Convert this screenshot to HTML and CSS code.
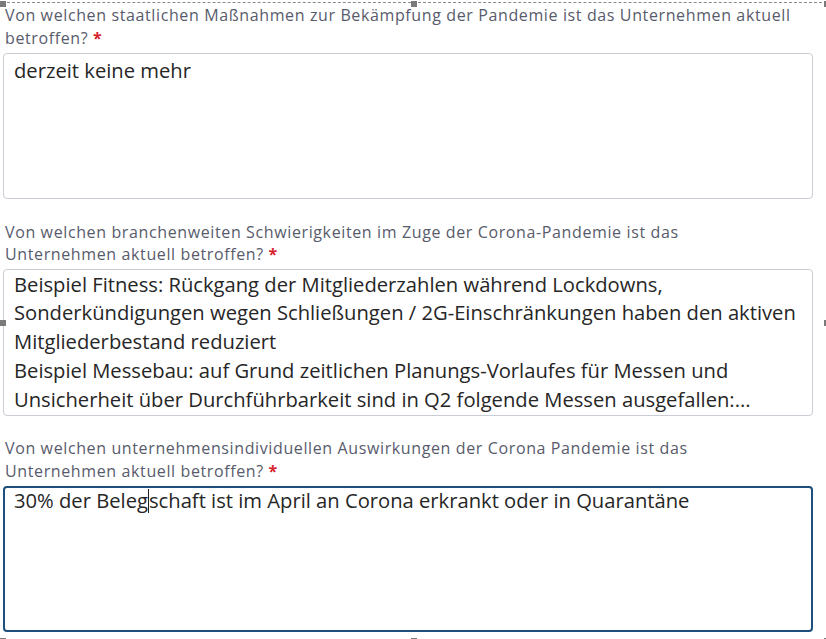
FILE: index.html
```html
<!DOCTYPE html>
<html lang="de">
<head>
    <meta charset="UTF-8">
    <title>Fragebogen Corona-Auswirkungen</title>
    <link rel="stylesheet" href="styles.css">
</head>
<body>
    <div class="selection-frame">
        <span class="handle handle-tl"></span>
        <span class="handle handle-tm"></span>
        <span class="handle handle-tr"></span>
        <span class="handle handle-ml"></span>
        <span class="handle handle-mr"></span>
        <span class="handle handle-bl"></span>
        <span class="handle handle-bm"></span>
        <span class="handle handle-br"></span>
    </div>

    <form class="survey">
        <div class="question">
            <label class="question-label">Von welchen staatlichen Maßnahmen zur Bekämpfung der Pandemie ist das Unternehmen aktuell<br>betroffen? <span class="required">*</span></label>
            <div class="answer">derzeit keine mehr</div>
        </div>

        <div class="question">
            <label class="question-label">Von welchen branchenweiten Schwierigkeiten im Zuge der Corona-Pandemie ist das<br>Unternehmen aktuell betroffen? <span class="required">*</span></label>
            <div class="answer answer-long">Beispiel Fitness: Rückgang der Mitgliederzahlen während Lockdowns,<br>Sonderkündigungen wegen Schließungen / 2G-Einschränkungen haben den aktiven<br>Mitgliederbestand reduziert<br>Beispiel Messebau: auf Grund zeitlichen Planungs-Vorlaufes für Messen und<br>Unsicherheit über Durchführbarkeit sind in Q2 folgende Messen ausgefallen:...</div>
        </div>

        <div class="question">
            <label class="question-label">Von welchen unternehmensindividuellen Auswirkungen der Corona Pandemie ist das<br>Unternehmen aktuell betroffen? <span class="required">*</span></label>
            <div class="answer answer-focus">30% der Beleg<span class="caret"></span>schaft ist im April an Corona erkrankt oder in Quarantäne</div>
        </div>
    </form>
</body>
</html>
```

FILE: styles.css
```css
* {
    margin: 0;
    padding: 0;
    box-sizing: border-box;
}
body {
    width: 826px;
    height: 639px;
    background: #fff;
    font-family: 'Open Sans', sans-serif;
    position: relative;
    overflow: hidden;
}
.survey {
    display: flex;
    flex-direction: column;
    gap: 21.5px;
    padding: 4px 13px 0 3px;
}
.question {
    display: flex;
    flex-direction: column;
    gap: 4px;
}
.question-label {
    display: block;
    padding-left: 2px;
    font-size: 16px;
    letter-spacing: 0.62px;
    line-height: 22.5px;
    color: #585b6c;
    white-space: nowrap;
}
.required {
    color: #d9232d;
    font-weight: bold;
}
.answer {
    height: 146px;
    border: 1px solid #c9ced4;
    border-radius: 4px;
    padding: 2px 10px;
    font-size: 20.2px;
    line-height: 29px;
    color: #262626;
    overflow: hidden;
    white-space: nowrap;
}
.answer-long {
    height: 147px;
    padding-top: 0;
    line-height: 28.8px;
    margin-top: -1px;
}
.answer-focus {
    border: 2px solid #1d4f7c;
    padding: 0 9px;
    line-height: 25px;
}
.caret {
    display: inline-block;
    width: 1px;
    height: 24px;
    background: #222;
    vertical-align: -5px;
}
.selection-frame {
    position: absolute;
    left: 2px;
    top: 2px;
    width: 820px;
    height: 634px;
    border-top: 1px dashed #8a8a8a;
    pointer-events: none;
}
.handle {
    position: absolute;
    width: 6px;
    height: 6px;
    background: #7a7a7a;
}
.handle-tl { left: -2px; top: -2px; }
.handle-tm { left: 409px; top: -2px; }
.handle-tr { right: -4px; top: -2px; width: 2px; }
.handle-ml { left: -2px; top: 317px; }
.handle-mr { right: -4px; top: 317px; width: 2px; }
.handle-bl { left: -2px; bottom: -4px; height: 2px; }
.handle-bm { left: 409px; bottom: -4px; height: 2px; }
.handle-br { right: -4px; bottom: -4px; width: 2px; height: 2px; }
```
